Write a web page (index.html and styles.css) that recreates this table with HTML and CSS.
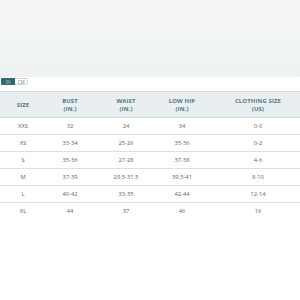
FILE: index.html
```html
<!DOCTYPE html>
<html>
<head>
<meta charset="utf-8">
<link rel="stylesheet" href="styles.css">
</head>
<body>
<div class="top"></div>
<div class="toggle"><span class="opt active">IN</span><span class="opt">CM</span></div>
<table class="sizes">
  <colgroup>
    <col class="c1"><col class="c2"><col class="c3"><col class="c4"><col class="c5">
  </colgroup>
  <thead>
    <tr><th>SIZE</th><th>BUST<br>(IN.)</th><th>WAIST<br>(IN.)</th><th>LOW HIP<br>(IN.)</th><th>CLOTHING SIZE<br>(US)</th></tr>
  </thead>
  <tbody>
    <tr><td>XXS</td><td>32</td><td>24</td><td>34</td><td>0-0</td></tr>
    <tr><td>XS</td><td>33-34</td><td>25-26</td><td>35-36</td><td>0-2</td></tr>
    <tr><td>S</td><td>35-36</td><td>27-28</td><td>37-38</td><td>4-6</td></tr>
    <tr><td>M</td><td>37-39</td><td>29.5-31.5</td><td>39.5-41</td><td>8-10</td></tr>
    <tr><td>L</td><td>40-42</td><td>33-35</td><td>42-44</td><td>12-14</td></tr>
    <tr class="last"><td>XL</td><td>44</td><td>37</td><td>46</td><td>16</td></tr>
  </tbody>
</table>
</body>
</html>
```
FILE: styles.css
```css
html, body {
  margin: 0;
  padding: 0;
  background: #ffffff;
}
body {
  width: 300px;
  height: 300px;
  overflow: hidden;
  font-family: "Open Sans", "Liberation Sans", sans-serif;
}
.top {
  height: 77px;
  background: linear-gradient(180deg, #f4f6f6 0%, #eef2f2 100%);
}
.toggle {
  display: flex;
  margin: 1px 0 0 1px;
  height: 7px;
}
.opt {
  display: flex;
  align-items: center;
  justify-content: center;
  width: 13px;
  height: 7px;
  font-size: 4.5px;
  color: #6a7a7c;
  border: 1px solid #cfd6d7;
  border-left: none;
  border-radius: 0 2px 2px 0;
  box-sizing: border-box;
  background: #fff;
}
.opt.active {
  width: 14px;
  background: #2f6a6d;
  color: #a8c4c5;
  border: none;
  border-radius: 1px 0 0 1px;
}
.sizes {
  margin-top: 6px;
  width: 310px;
  table-layout: fixed;
  border-collapse: collapse;
}
.c1 { width: 46px; }
.c2 { width: 48px; }
.c3 { width: 64px; }
.c4 { width: 48px; }
.c5 { width: 104px; }
th {
  height: 25px;
  padding: 0;
  background: #e9eef0;
  border-top: 1px solid #d3dbdd;
  border-bottom: 1px solid #d3dbdd;
  font-size: 5.9px;
  letter-spacing: 0.15px;
  line-height: 8px;
  font-weight: 700;
  color: #4f7880;
  text-align: center;
  vertical-align: middle;
}
td {
  height: 16px;
  padding: 0;
  border-bottom: 1px solid #dedede;
  font-size: 5.8px;
  color: #5f6363;
  text-align: center;
  vertical-align: middle;
}
tr.last td {
  border-bottom: none;
}
```
